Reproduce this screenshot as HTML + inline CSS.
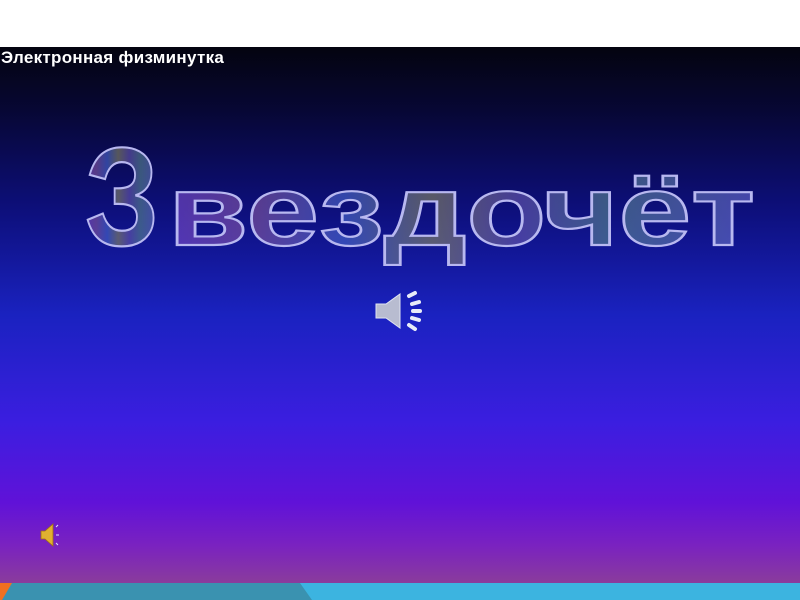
<!DOCTYPE html>
<html><head><meta charset="utf-8"><style>
html,body{margin:0;padding:0;width:800px;height:600px;overflow:hidden}
body{position:relative;background:#fff;font-family:"Liberation Sans",sans-serif}
#bg{position:absolute;left:0;top:47px;width:800px;height:536px;
background:linear-gradient(to bottom,#04040f 0%,#070735 12%,#0d0f7a 30%,#1a22c0 50%,#3b1ee0 70%,#6012d8 85%,#7a22c0 93%,#8a3c9c 100%)}
#t{position:absolute;left:1px;top:48px;color:#fff;font-weight:bold;font-size:17px;letter-spacing:0.3px}
#bar{position:absolute;left:0;top:583px;width:800px;height:17px;background:#3cb4e0}
</style></head><body>
<div id="bg"></div>
<div id="t">Электронная физминутка</div>
<svg style="position:absolute;left:0;top:0" width="800" height="600">
<defs>
<linearGradient id="g" x1="0" x2="1" y1="0" y2="0">
<stop offset="0" stop-color="#7a4ad0"/><stop offset="0.15" stop-color="#8a5aa0"/>
<stop offset="0.3" stop-color="#4a6ad0"/><stop offset="0.45" stop-color="#8a8a60"/>
<stop offset="0.6" stop-color="#6a5ab0"/><stop offset="0.75" stop-color="#5a8a90"/>
<stop offset="1" stop-color="#6a6ad0"/>
</linearGradient>
</defs>
<g font-family="Liberation Sans, DejaVu Sans, sans-serif" font-weight="bold" fill="url(#g)" fill-opacity="0.6" stroke="#b8b8f0" stroke-width="2.2">
<text x="85" y="245" font-size="140" textLength="74" lengthAdjust="spacingAndGlyphs">З</text>
<text x="168" y="245" font-size="100" textLength="587" lengthAdjust="spacingAndGlyphs">вездочёт</text>
</g>
<g transform="translate(374,294)">
<path d="M2 10h10l14-10v34l-14-10H2z" fill="#b8bcd0" stroke="#e0e4f0" stroke-width="1"/>
<g stroke="#e8ecf8" stroke-width="4" stroke-linecap="round">
<line x1="35" y1="2" x2="41" y2="-1"/><line x1="38" y1="10" x2="45" y2="8"/>
<line x1="39" y1="17" x2="46" y2="17"/><line x1="38" y1="24" x2="45" y2="26"/>
<line x1="35" y1="31" x2="41" y2="35"/></g></g>
<g transform="translate(41,524)">
<path d="M0 7h4l8-7v22l-8-7H0z" fill="#e0b030" stroke="#a07010" stroke-width=".8"/>
<g stroke="#e0e0ff" stroke-width="1"><line x1="15" y1="3" x2="17" y2="1"/><line x1="15" y1="11" x2="18" y2="11"/><line x1="15" y1="19" x2="17" y2="21"/></g></g>
</svg>
<div id="bar"></div>
<svg style="position:absolute;left:0;top:583px" width="800" height="17">
<polygon points="10,0 300,0 312,17 0,17 0,12" fill="#3a92b0"/>
<polygon points="0,0 12,0 2,17 0,17" fill="#f07020"/>
</svg>
</body></html>
